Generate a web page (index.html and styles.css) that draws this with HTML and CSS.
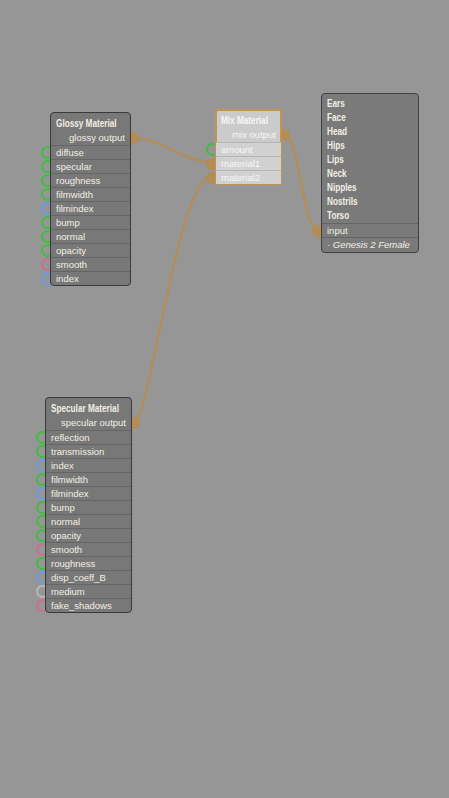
FILE: index.html
```html
<!DOCTYPE html>
<html>
<head>
<meta charset="utf-8">
<link rel="stylesheet" href="styles.css">
</head>
<body>
<div class="canvas">
  <svg class="wires" width="449" height="798" viewBox="0 0 449 798">
    <path d="M133 138 C163 138 182 162 212 162"/>
    <path d="M134 423 C150 420 178 176 212 176"/>
    <path d="M284 134 C299 134 303 231 318 231"/>
  </svg>

  <div class="node glossy">
    <div class="title"><span class="narrow">Glossy Material</span></div>
    <div class="out">glossy output<span class="sock osock"></span></div>
    <div class="row"><span class="sock isock green"></span>diffuse</div>
    <div class="row"><span class="sock isock green"></span>specular</div>
    <div class="row"><span class="sock isock green"></span>roughness</div>
    <div class="row"><span class="sock isock green"></span>filmwidth</div>
    <div class="row"><span class="sock isock blue"></span>filmindex</div>
    <div class="row"><span class="sock isock green"></span>bump</div>
    <div class="row"><span class="sock isock green"></span>normal</div>
    <div class="row"><span class="sock isock green"></span>opacity</div>
    <div class="row"><span class="sock isock pink"></span>smooth</div>
    <div class="row"><span class="sock isock blue"></span>index</div>
  </div>

  <div class="node mix">
    <div class="title"><span class="narrow">Mix Material</span></div>
    <div class="out">mix output<span class="sock osock"></span></div>
    <div class="row"><span class="sock isock green"></span>amount</div>
    <div class="row"><span class="sock isock filled"></span>material1</div>
    <div class="row"><span class="sock isock filled"></span>material2</div>
  </div>

  <div class="node genesis">
    <div class="item"><span class="narrow">Ears</span></div>
    <div class="item"><span class="narrow">Face</span></div>
    <div class="item"><span class="narrow">Head</span></div>
    <div class="item"><span class="narrow">Hips</span></div>
    <div class="item"><span class="narrow">Lips</span></div>
    <div class="item"><span class="narrow">Neck</span></div>
    <div class="item"><span class="narrow">Nipples</span></div>
    <div class="item"><span class="narrow">Nostrils</span></div>
    <div class="item"><span class="narrow">Torso</span></div>
    <div class="row"><span class="sock isock filled"></span>input</div>
    <div class="row label">· Genesis 2 Female</div>
  </div>

  <div class="node specular">
    <div class="title"><span class="narrow">Specular Material</span></div>
    <div class="out">specular output<span class="sock osock"></span></div>
    <div class="row"><span class="sock isock green"></span>reflection</div>
    <div class="row"><span class="sock isock green"></span>transmission</div>
    <div class="row"><span class="sock isock blue"></span>index</div>
    <div class="row"><span class="sock isock green"></span>filmwidth</div>
    <div class="row"><span class="sock isock blue"></span>filmindex</div>
    <div class="row"><span class="sock isock green"></span>bump</div>
    <div class="row"><span class="sock isock green"></span>normal</div>
    <div class="row"><span class="sock isock green"></span>opacity</div>
    <div class="row"><span class="sock isock pink"></span>smooth</div>
    <div class="row"><span class="sock isock green"></span>roughness</div>
    <div class="row"><span class="sock isock blue"></span>disp_coeff_B</div>
    <div class="row"><span class="sock isock grey"></span>medium</div>
    <div class="row"><span class="sock isock pink"></span>fake_shadows</div>
  </div>
</div>
</body>
</html>
```
FILE: styles.css
```css
body {
  margin: 0;
}
.canvas {
  position: relative;
  z-index: 0;
  width: 449px;
  height: 798px;
  background: #969696;
  overflow: hidden;
  font-family: "Liberation Sans", Arial, sans-serif;
}
.wires {
  position: absolute;
  left: 0;
  top: 0;
  z-index: -2;
}
.wires path {
  fill: none;
  stroke: #b48c55;
  stroke-width: 2.5;
  stroke-opacity: 0.9;
}
.node {
  position: absolute;
  box-sizing: border-box;
  background: #787878;
  border: 1px solid #3a3a3a;
  border-radius: 4px;
  padding-top: 4px;
  color: #f3efe4;
  font-size: 9.5px;
}
.glossy { left: 50px; top: 112px; width: 81px; height: 174px; }
.specular { left: 45px; top: 397px; width: 87px; height: 216px; }
.mix {
  left: 215px; top: 109px; width: 67px; height: 76px;
  padding-top: 3px;
  background: #cbcbcb;
  border: 2px solid #c39352;
  border-radius: 3px;
  color: #f7f7f7;
}
.mix .row,
.mix .out,
.mix .title {
  margin: 0 -1px;
}
.genesis {
  left: 321px; top: 93px; width: 98px; height: 160px;
  padding-top: 3px;
  background: #7a7a7a;
  border-color: #404040;
}
.title {
  height: 14px;
  line-height: 14px;
  padding-left: 5px;
  white-space: nowrap;
}
.narrow {
  display: inline-block;
  font-weight: bold;
  font-size: 10px;
  transform: scaleX(0.82);
  transform-origin: 0 50%;
  white-space: nowrap;
}
.out {
  position: relative;
  height: 14px;
  line-height: 14px;
  padding-right: 5px;
  text-align: right;
  white-space: nowrap;
}
.row {
  position: relative;
  box-sizing: border-box;
  height: 14px;
  line-height: 13px;
  padding-left: 5px;
  border-top: 1px solid #656565;
  white-space: nowrap;
}
.mix .row {
  background: #d1d1d1;
  border-top-color: #b5b5b5;
}
.item {
  height: 14px;
  line-height: 14px;
  padding-left: 5px;
  white-space: nowrap;
}
.label {
  padding-left: 5px;
  font-style: italic;
}
.sock {
  position: absolute;
  z-index: -1;
  box-sizing: border-box;
  border-radius: 50%;
  top: 50%;
}
.isock {
  left: -10px;
  width: 13px;
  height: 13px;
  margin-top: -6.5px;
  border: 2px solid #3fbf3f;
}
.isock.green { border-color: #3fbf3f; }
.isock.blue { border-color: #6b9be6; }
.isock.pink { border-color: #cc6f90; }
.isock.grey { border-color: #b8b8b8; }
.isock.filled {
  border: none;
  background: #b48c55;
  width: 12px;
  height: 12px;
  margin-top: -6px;
}
.osock {
  right: -9px;
  width: 12px;
  height: 12px;
  margin-top: -6px;
  background: #b48c55;
}
```
